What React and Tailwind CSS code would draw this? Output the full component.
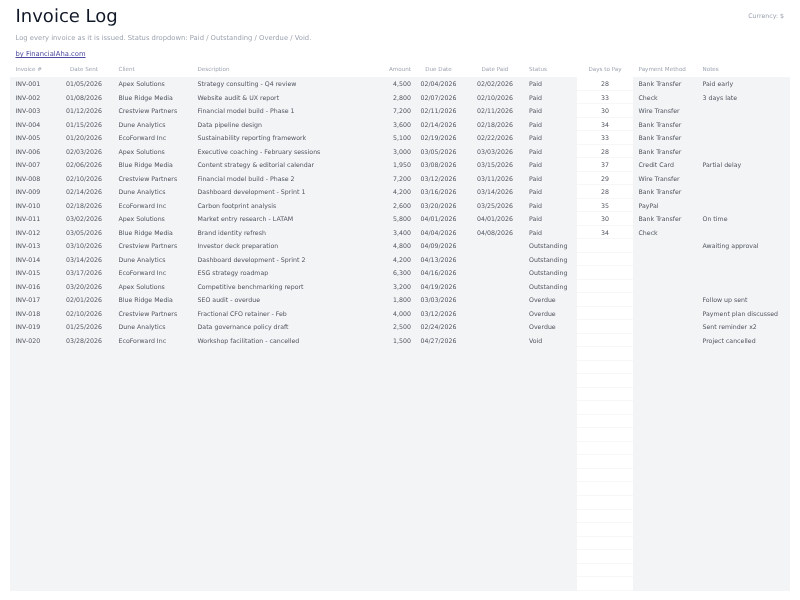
const invoices = [
  ['INV-001', '01/05/2026', 'Apex Solutions', 'Strategy consulting - Q4 review', '4,500', '02/04/2026', '02/02/2026', 'Paid', '28', 'Bank Transfer', 'Paid early'],
  ['INV-002', '01/08/2026', 'Blue Ridge Media', 'Website audit & UX report', '2,800', '02/07/2026', '02/10/2026', 'Paid', '33', 'Check', '3 days late'],
  ['INV-003', '01/12/2026', 'Crestview Partners', 'Financial model build - Phase 1', '7,200', '02/11/2026', '02/11/2026', 'Paid', '30', 'Wire Transfer', ''],
  ['INV-004', '01/15/2026', 'Dune Analytics', 'Data pipeline design', '3,600', '02/14/2026', '02/18/2026', 'Paid', '34', 'Bank Transfer', ''],
  ['INV-005', '01/20/2026', 'EcoForward Inc', 'Sustainability reporting framework', '5,100', '02/19/2026', '02/22/2026', 'Paid', '33', 'Bank Transfer', ''],
  ['INV-006', '02/03/2026', 'Apex Solutions', 'Executive coaching - February sessions', '3,000', '03/05/2026', '03/03/2026', 'Paid', '28', 'Bank Transfer', ''],
  ['INV-007', '02/06/2026', 'Blue Ridge Media', 'Content strategy & editorial calendar', '1,950', '03/08/2026', '03/15/2026', 'Paid', '37', 'Credit Card', 'Partial delay'],
  ['INV-008', '02/10/2026', 'Crestview Partners', 'Financial model build - Phase 2', '7,200', '03/12/2026', '03/11/2026', 'Paid', '29', 'Wire Transfer', ''],
  ['INV-009', '02/14/2026', 'Dune Analytics', 'Dashboard development - Sprint 1', '4,200', '03/16/2026', '03/14/2026', 'Paid', '28', 'Bank Transfer', ''],
  ['INV-010', '02/18/2026', 'EcoForward Inc', 'Carbon footprint analysis', '2,600', '03/20/2026', '03/25/2026', 'Paid', '35', 'PayPal', ''],
  ['INV-011', '03/02/2026', 'Apex Solutions', 'Market entry research - LATAM', '5,800', '04/01/2026', '04/01/2026', 'Paid', '30', 'Bank Transfer', 'On time'],
  ['INV-012', '03/05/2026', 'Blue Ridge Media', 'Brand identity refresh', '3,400', '04/04/2026', '04/08/2026', 'Paid', '34', 'Check', ''],
  ['INV-013', '03/10/2026', 'Crestview Partners', 'Investor deck preparation', '4,800', '04/09/2026', '', 'Outstanding', '', '', 'Awaiting approval'],
  ['INV-014', '03/14/2026', 'Dune Analytics', 'Dashboard development - Sprint 2', '4,200', '04/13/2026', '', 'Outstanding', '', '', ''],
  ['INV-015', '03/17/2026', 'EcoForward Inc', 'ESG strategy roadmap', '6,300', '04/16/2026', '', 'Outstanding', '', '', ''],
  ['INV-016', '03/20/2026', 'Apex Solutions', 'Competitive benchmarking report', '3,200', '04/19/2026', '', 'Outstanding', '', '', ''],
  ['INV-017', '02/01/2026', 'Blue Ridge Media', 'SEO audit - overdue', '1,800', '03/03/2026', '', 'Overdue', '', '', 'Follow up sent'],
  ['INV-018', '02/10/2026', 'Crestview Partners', 'Fractional CFO retainer - Feb', '4,000', '03/12/2026', '', 'Overdue', '', '', 'Payment plan discussed'],
  ['INV-019', '01/25/2026', 'Dune Analytics', 'Data governance policy draft', '2,500', '02/24/2026', '', 'Overdue', '', '', 'Sent reminder x2'],
  ['INV-020', '03/28/2026', 'EcoForward Inc', 'Workshop facilitation - cancelled', '1,500', '04/27/2026', '', 'Void', '', '', 'Project cancelled'],
];

const headers = ['Invoice #', 'Date Sent', 'Client', 'Description', 'Amount', 'Due Date', 'Date Paid', 'Status', 'Days to Pay', 'Payment Method', 'Notes'];
const emptyRows = Array.from({ length: 18 }, () => Array(11).fill(''));

const gridCols = 'grid grid-cols-[51px_52px_79px_191px_33px_47px_64px_50px_56px_64px_93px]';
const align = ['pl-[5.5px]', 'text-center pr-[6px]', 'pl-[5.5px]', 'pl-[5.5px]', 'text-right pr-[5px]', 'text-center pr-[2px]', 'text-center', 'pl-[2px]', 'text-center', 'pl-[5.5px]', 'pl-[5.5px]'];

function Row({ cells }) {
  return (
    <div className={`${gridCols} auto-rows-[13.53px] leading-[15.4px] text-[6.25px] text-[#50555f]`}>
      <Cell text={cells[0]} i={0} />
      <Cell text={cells[1]} i={1} />
      <Cell text={cells[2]} i={2} />
      <Cell text={cells[3]} i={3} />
      <Cell text={cells[4]} i={4} />
      <Cell text={cells[5]} i={5} />
      <Cell text={cells[6]} i={6} />
      <Cell text={cells[7]} i={7} />
      <div className="bg-white border-b border-[#f6f7f8] text-center">{cells[8]}</div>
      <Cell text={cells[9]} i={9} />
      <Cell text={cells[10]} i={10} />
    </div>
  );
}

function Cell({ text, i }) {
  return <div className={`bg-[#f3f4f6] whitespace-nowrap ${align[i]}`}>{text}</div>;
}

export default function App() {
  return (
    <div className="w-[800px] h-[600px] overflow-hidden bg-white px-[10px] blur-[0.3px] font-['DejaVu_Sans',sans-serif] [text-rendering:geometricPrecision]">
      <div className="flex justify-between items-start pt-[5px]">
        <h1 className="pl-[5.5px] text-[18px] leading-[24px] text-[#111827]">Invoice Log</h1>
        <span className="pt-[7px] pr-[6px] text-[6.25px] leading-[10px] text-[#9ca3af]">Currency: $</span>
      </div>
      <p className="pl-[5.5px] mt-[4px] text-[6.8px] leading-[10px] text-[#9ca3af]">Log every invoice as it is issued. Status dropdown: Paid / Outstanding / Overdue / Void.</p>
      <a href="#" className="block w-fit ml-[5.5px] mt-[6px] text-[6.8px] leading-[10px] text-[#4c4a9e] underline">by FinancialAha.com</a>
      <div className={`${gridCols} mt-[5px] h-[13px] items-center text-[5.625px] text-[#9ca3af]`}>
        {headers.map((h, i) => (
          <div key={h} className={`whitespace-nowrap ${align[i]}`}>{h}</div>
        ))}
      </div>
      {invoices.map((row) => (
        <Row key={row[0]} cells={row} />
      ))}
      {emptyRows.map((row, i) => (
        <Row key={i} cells={row} />
      ))}
    </div>
  );
}
